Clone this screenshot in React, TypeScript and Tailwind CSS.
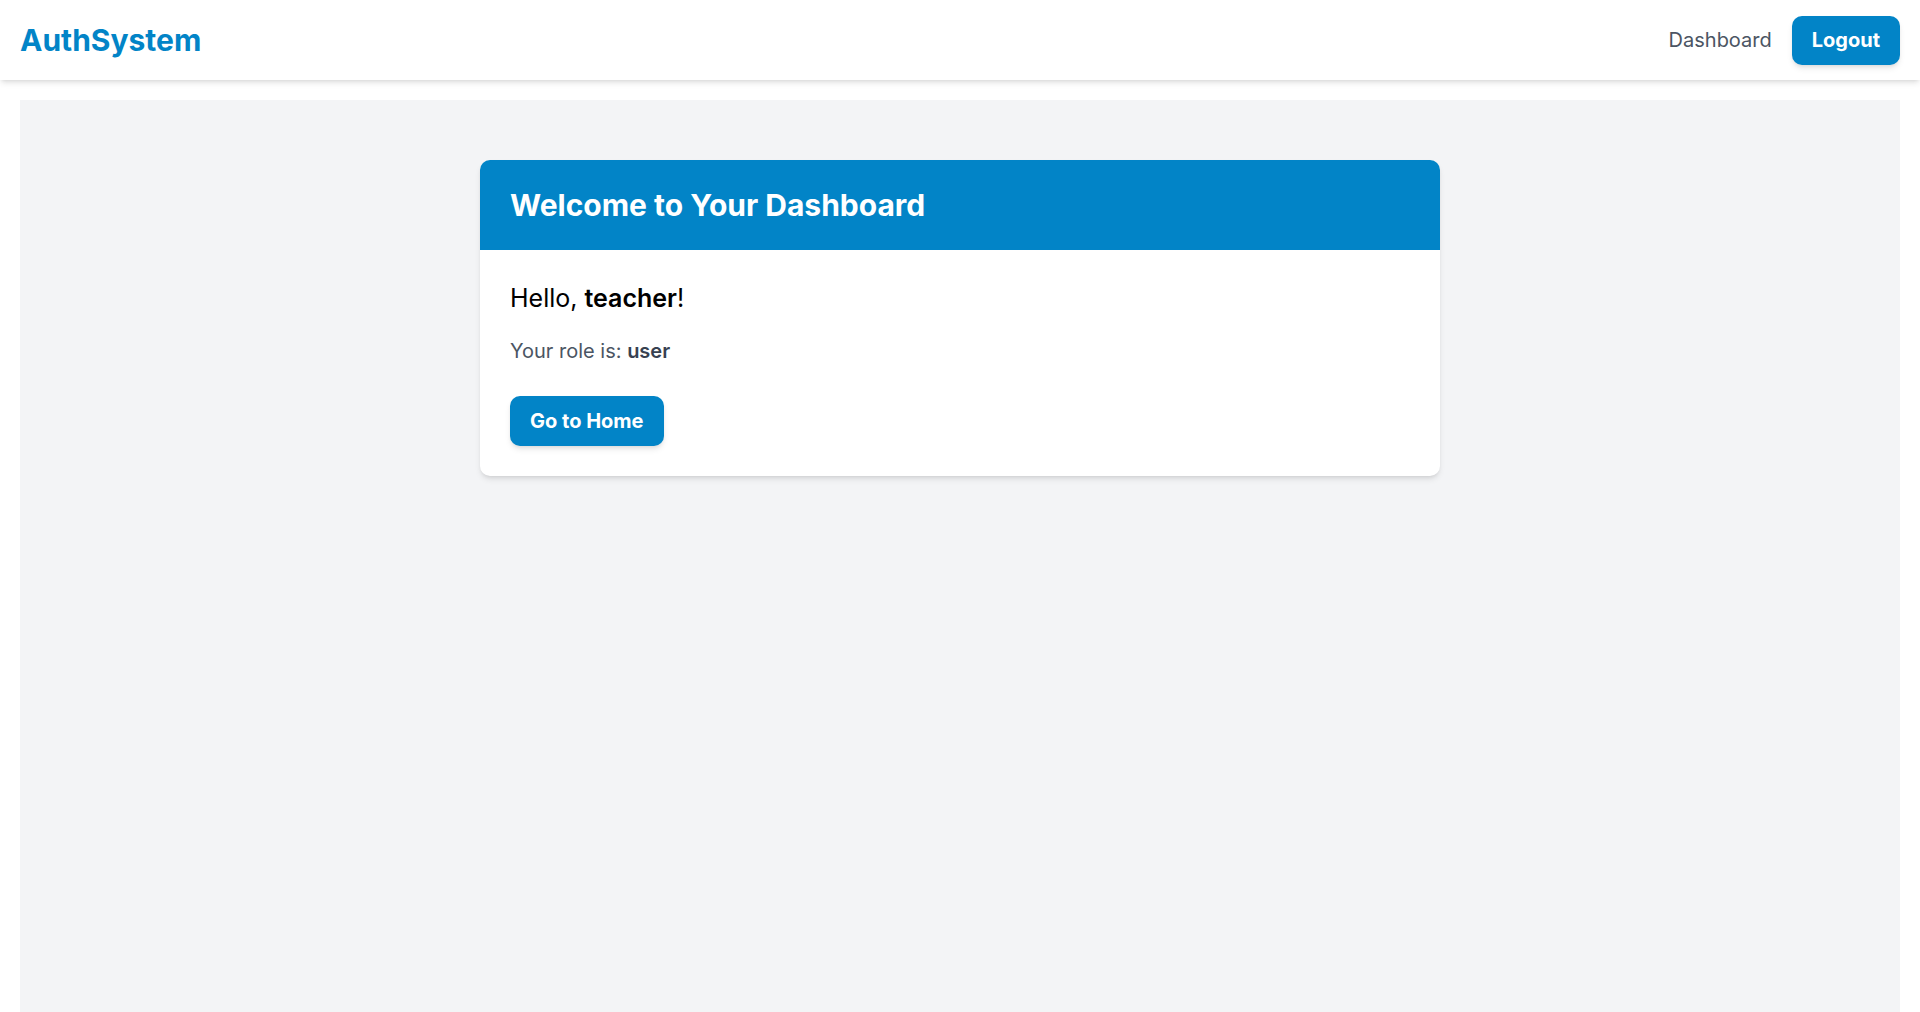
import React from "react";

const Navbar = () => {
  return (
    <nav className="h-[80px] bg-white shadow-md flex items-center justify-between px-5">
      <span className="text-[30px] font-bold text-[#0284c7]">AuthSystem</span>
      <div className="flex items-center gap-5">
        <a href="#" className="text-[20px] text-[#4b5563]">
          Dashboard
        </a>
        <button className="h-[49px] px-5 rounded-[10px] bg-[#0284c7] text-white text-[20px] font-bold shadow-md">
          Logout
        </button>
      </div>
    </nav>
  );
};

export default function App() {
  const user = { username: "teacher", role: "user" };

  return (
    <div className="min-h-screen bg-white font-['Inter',sans-serif]">
      <Navbar />
      <main className="mx-5 mt-5 min-h-screen bg-[#f3f4f6] pt-[60px]">
        <div className="w-[960px] mx-auto bg-white rounded-[10px] shadow-md overflow-hidden">
          <div className="bg-[#0284c7] px-[30px] py-[25px]">
            <h1 className="text-[30px] leading-[40px] font-bold text-white">
              Welcome to Your Dashboard
            </h1>
          </div>
          <div className="px-[30px] pt-[30px] pb-[30px]">
            <p className="text-[25px] text-black">
              Hello, <span className="font-semibold">{user.username}</span>!
            </p>
            <p className="mt-[18px] text-[20px] text-[#4b5563]">
              Your role is: <span className="font-semibold text-[#374151]">{user.role}</span>
            </p>
            <button className="mt-[30px] h-[50px] px-5 rounded-[10px] bg-[#0284c7] text-white text-[20px] font-bold shadow-md">
              Go to Home
            </button>
          </div>
        </div>
      </main>
    </div>
  );
}
